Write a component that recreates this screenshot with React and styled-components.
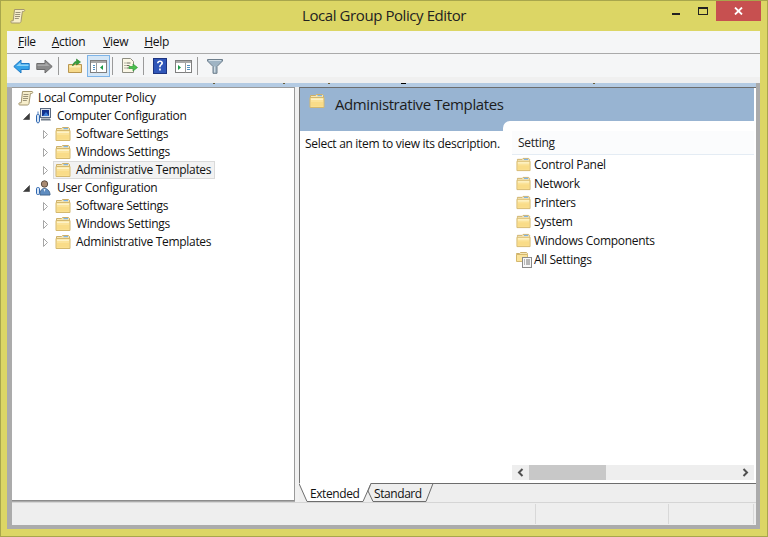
import React from 'react';
import styled, { createGlobalStyle } from 'styled-components';

const GlobalStyle = createGlobalStyle`
  html, body { margin: 0; padding: 0; background: #dcd665; }
  body { font-family: "Open Sans", "Liberation Sans", sans-serif; font-size: 12px; color: #000; }
`;

const Win = styled.div`
  width: 768px;
  height: 537px;
  box-sizing: border-box;
  background: #dcd665;
  border: 1px solid #a8a64c;
  display: flex;
  flex-direction: column;
  overflow: hidden;
`;

const TitleBar = styled.div`
  height: 30px;
  flex: none;
  display: flex;
  align-items: flex-start;
  position: relative;
`;

const TitleIcon = styled.div`
  margin: 7px 0 0 9px;
  width: 16px;
  height: 16px;
`;

const TitleText = styled.div`
  position: absolute;
  left: 0;
  right: 0;
  top: 3px;
  text-align: center;
  font-size: 15px;
  line-height: 22px;
  color: #222;
  letter-spacing: -0.42px;
`;

const WinButtons = styled.div`
  margin-left: auto;
  margin-right: 6px;
  display: flex;
  align-items: flex-start;
`;

const MinBtn = styled.div`
  width: 8px;
  height: 2px;
  background: #222;
  margin: 12px 18px 0 0;
`;

const MaxBtn = styled.div`
  width: 10px;
  height: 8px;
  box-sizing: border-box;
  border: 1px solid #222;
  border-top-width: 2px;
  margin: 6px 8px 0 0;
`;

const CloseBtn = styled.div`
  width: 45px;
  height: 20px;
  background: #c75050;
  display: flex;
  align-items: center;
  justify-content: center;
`;

const Client = styled.div`
  flex: 1;
  margin: 0 7px 7px 6px;
  display: flex;
  flex-direction: column;
  background: #ababab;
  min-height: 0;
`;

const MenuBar = styled.div`
  height: 22px;
  box-sizing: content-box;
  background: #f5f6f7;
  border-bottom: 1px solid #aaaaaa;
  display: flex;
  align-items: center;
  padding-left: 11px;
  flex: none;
`;

const MenuItem = styled.span`
  margin-right: ${(p) => p.$gap}px;
  margin-top: -2px;
  color: #111;
  letter-spacing: -0.3px;
  u { text-decoration-thickness: 1px; }
`;

const ToolBar = styled.div`
  height: 22px;
  padding-top: 1px;
  box-sizing: content-box;
  background: #f5f6f7;
  display: flex;
  align-items: center;
  padding-left: 6px;
  flex: none;
`;

const ToolBtn = styled.div`
  width: ${(p) => p.$w || 23}px;
  height: 22px;
  box-sizing: border-box;
  display: flex;
  align-items: center;
  justify-content: center;
  ${(p) => p.$active && 'background: #d4e6f6; border: 1px solid #7db4e8;'}
`;

const ToolSep = styled.div`
  width: 1px;
  height: 18px;
  background: #9a9a9a;
  margin: 0 ${(p) => p.$r}px 0 ${(p) => p.$l}px;
`;

const Strip = styled.div`
  height: 6px;
  background: #f0f0f0;
  flex: none;
`;

const BlueStrip = styled.div`
  height: 4px;
  background: #b4cbe3;
  margin-right: 4px;
  flex: none;
  position: relative;
`;

const Speck = styled.span`
  position: absolute;
  top: 0;
  left: ${(p) => p.$x}px;
  width: ${(p) => p.$w}px;
  height: 1px;
  background: ${(p) => (p.$w > 2 ? '#000' : '#6a5f3c')};
`;

const Panes = styled.div`
  flex: 1;
  min-height: 0;
  display: flex;
  padding: 0 4px 0 5px;
`;

const TreePane = styled.div`
  width: 282px;
  flex: none;
  background: #fff;
  border-top: 1px solid #9a9a9a;
  border-bottom: 1px solid #8c8c8c;
  border-right: 1px solid #9a9a9a;
  padding-top: 1px;
  margin-bottom: 1px;
`;

const Splitter = styled.div`
  width: 4px;
  flex: none;
  background: #f0f0f0;
`;

const RightPane = styled.div`
  flex: 1;
  min-width: 0;
  display: flex;
  flex-direction: column;
  background: #fff;
  border-top: 1px solid #6d6d6d;
  border-left: 1px solid #777;
`;

const Row = styled.div`
  height: 18px;
  display: flex;
  align-items: center;
  padding-left: ${(p) => p.$indent}px;
`;

const Arrow = styled.div`
  width: 12px;
  height: 12px;
  flex: none;
  display: flex;
  align-items: center;
  justify-content: center;
  margin-right: ${(p) => p.$mr}px;
`;

const RowIcon = styled.div`
  width: 16px;
  height: 16px;
  flex: none;
  margin-right: ${(p) => p.$mr || 0}px;
`;

const Label = styled.span`
  letter-spacing: -0.3px;
  color: #111;
  white-space: nowrap;
  padding: 0 3px;
  height: 18px;
  line-height: 17px;
  box-sizing: border-box;
`;

const SelectedWrap = styled.div`
  display: flex;
  align-items: center;
  background: #f2f2f2;
  outline: 1px solid #dadada;
  outline-offset: -1px;
  height: 18px;
  padding-left: 2px;
  margin-left: -2px;
  padding-right: 1px;
`;

const DetailsHead = styled.div`
  height: 43px;
  flex: none;
  margin-right: 2px;
  background: #98b4d2;
  display: flex;
  align-items: flex-start;
  padding: 5px 0 0 9px;
  box-sizing: border-box;
`;

const DetailsTitle = styled.span`
  font-size: 15px;
  line-height: 22px;
  color: #1c1c1c;
  letter-spacing: -0.4px;
  margin-left: 10px;
`;

const DetailsBody = styled.div`
  flex: 1;
  min-height: 0;
  display: flex;
  background: #fff;
`;

const Description = styled.div`
  width: 203px;
  flex: none;
  padding: 4px 0 0 5px;
  box-sizing: border-box;
  line-height: 18px;
  letter-spacing: -0.3px;
  color: #111;
  white-space: nowrap;
`;

const ListColumn = styled.div`
  flex: 1;
  min-width: 0;
  margin-top: -10px;
  padding: 10px 2px 1px 9px;
  background: #fff;
  border-top-left-radius: 7px;
  display: flex;
  flex-direction: column;
`;

const ListHeader = styled.div`
  height: 23px;
  flex: none;
  background: #fbfcfd;
  border-bottom: 1px solid #e4ecf4;
  padding-left: 6px;
  line-height: 23px;
  letter-spacing: -0.3px;
  color: #222;
`;

const ListBody = styled.div`
  flex: 1;
  min-height: 0;
`;

const ListRow = styled.div`
  height: 19px;
  display: flex;
  align-items: center;
  padding-left: 4px;
  letter-spacing: -0.3px;
  color: #111;
  white-space: nowrap;
`;

const ListText = styled.span`
  margin-left: ${(p) => p.$ml}px;
`;

const ScrollBar = styled.div`
  height: 15px;
  flex: none;
  background: #eeeeee;
  display: flex;
  align-items: center;
  margin-bottom: 2px;
`;

const ScrollBtn = styled.div`
  width: 17px;
  height: 15px;
  flex: none;
  display: flex;
  align-items: center;
  justify-content: center;
`;

const ScrollThumb = styled.div`
  width: 77px;
  height: 15px;
  flex: none;
  background: #c8c8c8;
`;

const ScrollTrack = styled.div`
  flex: 1;
`;

const TabBar = styled.div`
  height: 19px;
  flex: none;
  margin-left: -1px;
  background: #eeeeee;
  border-top: 1px solid #6d6d6d;
  box-sizing: border-box;
  position: relative;
`;

const TabShapes = styled.svg`
  position: absolute;
  left: 0;
  top: -1px;
`;

const TabLabel = styled.span`
  position: absolute;
  top: 1px;
  left: ${(p) => p.$x}px;
  line-height: 17px;
  letter-spacing: -0.42px;
  color: #111;
`;

const StatusBar = styled.div`
  height: 23px;
  flex: none;
  margin: 0 4px 4px 5px;
  background: #eeeeee;
  border-top: 1px solid #d5d5d5;
  display: flex;
  justify-content: flex-end;
  box-sizing: border-box;
  padding-top: 1px;
`;

const StatusCell = styled.div`
  width: ${(p) => p.$w}px;
  height: 20px;
  box-sizing: border-box;
  border-left: 1px solid #d8d8d8;
`;

const Folder = ({ size = 16 }) => (
  <svg width={size} height={size} viewBox="0 0 16 16">
    <path d="M1.5 4V2.5h5l1-1h6l1 1V4" fill="#f6e6b4" stroke="#cdb06a" />
    <rect x="8.5" y="2" width="4.5" height="1.2" fill="#7fb4e6" />
    <path d="M1 4.5h14v10H1z" fill="#fbe39a" stroke="#d4b86e" />
    <path d="M2 5.5h12v1.5H2z" fill="#fdf2c8" />
    <path d="M2 9h12v4.5H2z" fill="#f9dc88" />
  </svg>
);

const Scroll = () => (
  <svg width="16" height="16" viewBox="0 0 16 16">
    <path d="M4.5 1.5h9.5c1 0 1 2-.5 2H12.4L11 13.5c-.2 1.2-1 1.5-2 1.5H1.8c-1.3 0-1.5-2.2 0-2.2h1.4z" fill="#f7eecb" stroke="#a3966f" />
    <path d="M5.5 4.5h5M5.2 6.5h5M5 8.5h5M4.8 10.5h4" stroke="#9a9278" />
  </svg>
);

const ComputerIcon = () => (
  <svg width="16" height="16" viewBox="0 0 16 16">
    <rect x="5.5" y="0.5" width="10" height="9" fill="#dbe4ee" stroke="#5a6a80" />
    <rect x="7" y="2" width="7" height="6" fill="#12328c" />
    <path d="M8 8l3-4 3 4z" fill="#3e7fd8" />
    <path d="M6 10.5h9l1 2H6z" fill="#6d7886" />
    <rect x="1.5" y="6.5" width="3" height="8" rx="1.2" fill="#d8e6f6" stroke="#2e66b0" />
    <path d="M3 3.5v3M3 14.5v1" stroke="#4c7dbc" />
  </svg>
);

const UserIcon = () => (
  <svg width="16" height="16" viewBox="0 0 16 16">
    <circle cx="9.5" cy="4" r="3.2" fill="#a98a70" stroke="#5e4f42" />
    <path d="M5 15c0-4 1.5-6.5 4.5-6.5S15 11 15 15z" fill="#5e8cc0" stroke="#43668e" />
    <path d="M8.5 9h2l-1 3z" fill="#e8eef4" />
    <rect x="1.5" y="7.5" width="3" height="7" rx="1.2" fill="#d8e6f6" stroke="#2e66b0" />
  </svg>
);

const SettingsIcon = () => (
  <svg width="18" height="17" viewBox="0 0 18 17">
    <path d="M0.5 3.5V2.5h3l1-1h6l1 1v1" fill="#f6e6b4" stroke="#cdb06a" />
    <path d="M0.5 3.5h11v7h-11z" fill="#fbe39a" stroke="#d4b86e" />
    <rect x="6.5" y="6.5" width="9" height="10" fill="#f8f8f8" stroke="#8a8a8a" />
    <path d="M8 9h1M10 9h4M8 11h1M10 11h4M8 13h1M10 13h4" stroke="#777" />
  </svg>
);

const ExpandArrow = () => (
  <svg width="7" height="9" viewBox="0 0 7 9">
    <path d="M1.5 0.5l4 4-4 4z" fill="#fff" stroke="#a6a6a6" />
  </svg>
);

const CollapseArrow = () => (
  <svg width="7" height="7" viewBox="0 0 7 7">
    <path d="M6.5 0.5v6h-6z" fill="#3c3c3c" stroke="#3c3c3c" strokeWidth="0.6" />
  </svg>
);

const MirrorSvg = styled.svg`
  transform: ${(p) => (p.$mirror ? 'scaleX(-1)' : 'none')};
`;

const NavArrow = ({ dir, grey }) => (
  <MirrorSvg $mirror={dir === 'right'} width="17" height="15" viewBox="0 0 17 15">
    <path
      d="M0.8 7.5L8 1v3.5h8.2v6H8V14z"
      fill={grey ? '#8a8a8a' : '#35a3e8'}
      stroke={grey ? '#6c6c6c' : '#1f78c4'}
      strokeLinejoin="round"
    />
    <path d="M3 7.2L7.5 3.4v2.2h8V7H3z" fill={grey ? '#a8a8a8' : '#8fd4f8'} />
  </MirrorSvg>
);

const UpFolder = () => (
  <svg width="16" height="16" viewBox="0 0 16 16">
    <path d="M1.5 6.5h13v8h-13z" fill="#f6d98a" stroke="#b89650" />
    <path d="M2.5 7.5h11v2h-11z" fill="#fbeebd" />
    <path d="M5.5 8C6 5 7.5 3.6 9.5 3.2V1l4 3-4 3V5C8 5.4 7 6.4 5.5 8z" fill="#35a03a" stroke="#2a7e2e" strokeWidth="0.6" />
  </svg>
);

const PaneIcon = ({ variant }) => (
  <svg width="17" height="13" viewBox="0 0 17 13">
    <rect x="0.5" y="0.5" width="16" height="12" fill="#fff" stroke="#7e7e7e" />
    <rect x="1" y="1" width="15" height="2" fill="#a9a9a9" />
    {variant === 'hide' ? (
      <>
        <path d="M3 5h2v1H3zM3 7h2v1H3zM3 9h2v1H3z" fill="#4f8fc0" />
        <path d="M6.5 3v9.5" stroke="#9a9a9a" />
        <path d="M13 5v5l-3-2.5z" fill="#1c9c48" />
      </>
    ) : (
      <>
        <path d="M3 5v5l3-2.5z" fill="#1c9c48" />
        <path d="M10.5 3v9.5" stroke="#9a9a9a" />
        <path d="M12 5h3v1h-3zM12 7h3v1h-3zM12 9h3v1h-3z" fill="#4f8fc0" />
      </>
    )}
  </svg>
);

const ExportIcon = () => (
  <svg width="17" height="16" viewBox="0 0 17 16">
    <path d="M1.5 0.5h8l3 3v11h-11z" fill="#fbf7e6" stroke="#8d8d80" />
    <path d="M3.5 5h1M5.5 5h4M3.5 7.5h1M5.5 7.5h3M3.5 10h1M5.5 10h3" stroke="#6e6e60" />
    <path d="M8 8.5h4V6l4.5 3.5L12 13v-2.5H8z" fill="#4cc04c" stroke="#2f9a3a" strokeWidth="0.7" />
  </svg>
);

const HelpIcon = () => (
  <svg width="14" height="16" viewBox="0 0 14 16">
    <rect x="0.5" y="0.5" width="13" height="15" fill="#2f56b8" stroke="#1d3480" />
    <path d="M4 5.2C4 3.4 5.4 2.6 7 2.6c1.8 0 3 1 3 2.4 0 1.6-1.4 2-2 2.8-.3.4-.3.8-.3 1.4H6.2c0-1 0-1.6.6-2.3.6-.7 1.5-1 1.5-1.9 0-.6-.5-1-1.3-1-.9 0-1.3.5-1.4 1.2zM6.1 10.6h1.7v1.8H6.1z" fill="#fff" />
  </svg>
);

const FilterIcon = () => (
  <svg width="16" height="15" viewBox="0 0 16 15">
    <path d="M0.5 0.5h15v1.5L10 7.5v6.8H6V7.5L0.5 2z" fill="#9fb4c4" stroke="#6e7f8c" />
    <path d="M2 1.2h12v.8H2z" fill="#dfe8ee" />
    <path d="M7 7.5h1.2v6H7z" fill="#d0dbe2" />
  </svg>
);

const ScrollChevron = ({ left }) => (
  <svg width="7" height="9" viewBox="0 0 7 9">
    <path d={left ? 'M5.5 1L2 4.5 5.5 8' : 'M1.5 1L5 4.5 1.5 8'} fill="none" stroke="#505050" strokeWidth="2" />
  </svg>
);

const TreeRow = ({ level, open, icon, text, selected }) => {
  if (level === 0) {
    return (
      <Row $indent={6}>
        <RowIcon $mr={1}>{icon}</RowIcon>
        <Label>{text}</Label>
      </Row>
    );
  }
  return (
    <Row $indent={level === 1 ? 8 : 27}>
      <Arrow $mr={level === 2 ? 4 : 3}>
        {open ? <CollapseArrow /> : <ExpandArrow />}
      </Arrow>
      {selected ? (
        <SelectedWrap>
          <RowIcon $mr={2}>{icon}</RowIcon>
          <Label>{text}</Label>
        </SelectedWrap>
      ) : (
        <>
          <RowIcon $mr={level === 2 ? 2 : 3}>{icon}</RowIcon>
          <Label>{text}</Label>
        </>
      )}
    </Row>
  );
};

const settings = ['Control Panel', 'Network', 'Printers', 'System', 'Windows Components'];

const specks = [
  { x: 206, w: 2 },
  { x: 276, w: 2 },
  { x: 321, w: 2 },
  { x: 394, w: 5 },
  { x: 586, w: 2 },
];

const App = () => (
  <>
    <GlobalStyle />
    <Win>
      <TitleBar>
        <TitleIcon><Scroll /></TitleIcon>
        <TitleText>Local Group Policy Editor</TitleText>
        <WinButtons>
          <MinBtn />
          <MaxBtn />
          <CloseBtn>
            <svg width="9" height="8" viewBox="0 0 9 8">
              <path d="M1 0.5l7 7M8 0.5l-7 7" stroke="#fff" strokeWidth="1.8" />
            </svg>
          </CloseBtn>
        </WinButtons>
      </TitleBar>
      <Client>
        <MenuBar>
          <MenuItem $gap={16}><u>F</u>ile</MenuItem>
          <MenuItem $gap={18}><u>A</u>ction</MenuItem>
          <MenuItem $gap={16}><u>V</u>iew</MenuItem>
          <MenuItem $gap={0}><u>H</u>elp</MenuItem>
        </MenuBar>
        <ToolBar>
          <ToolBtn $w={17}><NavArrow dir="left" /></ToolBtn>
          <ToolBtn $w={6} />
          <ToolBtn $w={17}><NavArrow dir="right" grey /></ToolBtn>
          <ToolSep $l={5} $r={6} />
          <ToolBtn $w={19}><UpFolder /></ToolBtn>
          <ToolBtn $w={3} />
          <ToolBtn $active><PaneIcon variant="hide" /></ToolBtn>
          <ToolSep $l={2} $r={7} />
          <ToolBtn $w={19}><ExportIcon /></ToolBtn>
          <ToolSep $l={4} $r={7} />
          <ToolBtn $w={17}><HelpIcon /></ToolBtn>
          <ToolBtn $w={7} />
          <ToolBtn $w={17}><PaneIcon variant="show" /></ToolBtn>
          <ToolSep $l={5} $r={7} />
          <ToolBtn $w={19}><FilterIcon /></ToolBtn>
        </ToolBar>
        <Strip />
        <BlueStrip>
          {specks.map((s) => <Speck key={s.x} $x={s.x} $w={s.w} />)}
        </BlueStrip>
        <Panes>
          <TreePane>
            <TreeRow level={0} icon={<Scroll />} text="Local Computer Policy" />
            <TreeRow level={1} open icon={<ComputerIcon />} text="Computer Configuration" />
            <TreeRow level={2} icon={<Folder />} text="Software Settings" />
            <TreeRow level={2} icon={<Folder />} text="Windows Settings" />
            <TreeRow level={2} icon={<Folder />} text="Administrative Templates" selected />
            <TreeRow level={1} open icon={<UserIcon />} text="User Configuration" />
            <TreeRow level={2} icon={<Folder />} text="Software Settings" />
            <TreeRow level={2} icon={<Folder />} text="Windows Settings" />
            <TreeRow level={2} icon={<Folder />} text="Administrative Templates" />
          </TreePane>
          <Splitter />
          <RightPane>
            <DetailsHead>
              <Folder />
              <DetailsTitle>Administrative Templates</DetailsTitle>
            </DetailsHead>
            <DetailsBody>
              <Description>Select an item to view its description.</Description>
              <ListColumn>
                <ListHeader>Setting</ListHeader>
                <ListBody>
                  {settings.map((s) => (
                    <ListRow key={s}><Folder size={15} /><ListText $ml={3}>{s}</ListText></ListRow>
                  ))}
                  <ListRow><SettingsIcon /><ListText $ml={0}>All Settings</ListText></ListRow>
                </ListBody>
                <ScrollBar>
                  <ScrollBtn><ScrollChevron left /></ScrollBtn>
                  <ScrollThumb />
                  <ScrollTrack />
                  <ScrollBtn><ScrollChevron /></ScrollBtn>
                </ScrollBar>
              </ListColumn>
            </DetailsBody>
            <TabBar>
              <TabShapes width="140" height="20" viewBox="0 0 140 20">
                <path d="M0 0.5L8 18.5H64L72 0.5" fill="#fff" stroke="#6d6d6d" />
                <path d="M0.5 0.5H71.5" stroke="#fff" />
                <path d="M72 0.5L69 8L74 18.5H127L134 0.5z" fill="#eeeeee" stroke="#6d6d6d" />
              </TabShapes>
              <TabLabel $x={11}>Extended</TabLabel>
              <TabLabel $x={75}>Standard</TabLabel>
            </TabBar>
          </RightPane>
        </Panes>
        <StatusBar>
          <StatusCell $w={133} />
          <StatusCell $w={85} />
          <StatusCell $w={3} />
        </StatusBar>
      </Client>
    </Win>
  </>
);

export default App;
